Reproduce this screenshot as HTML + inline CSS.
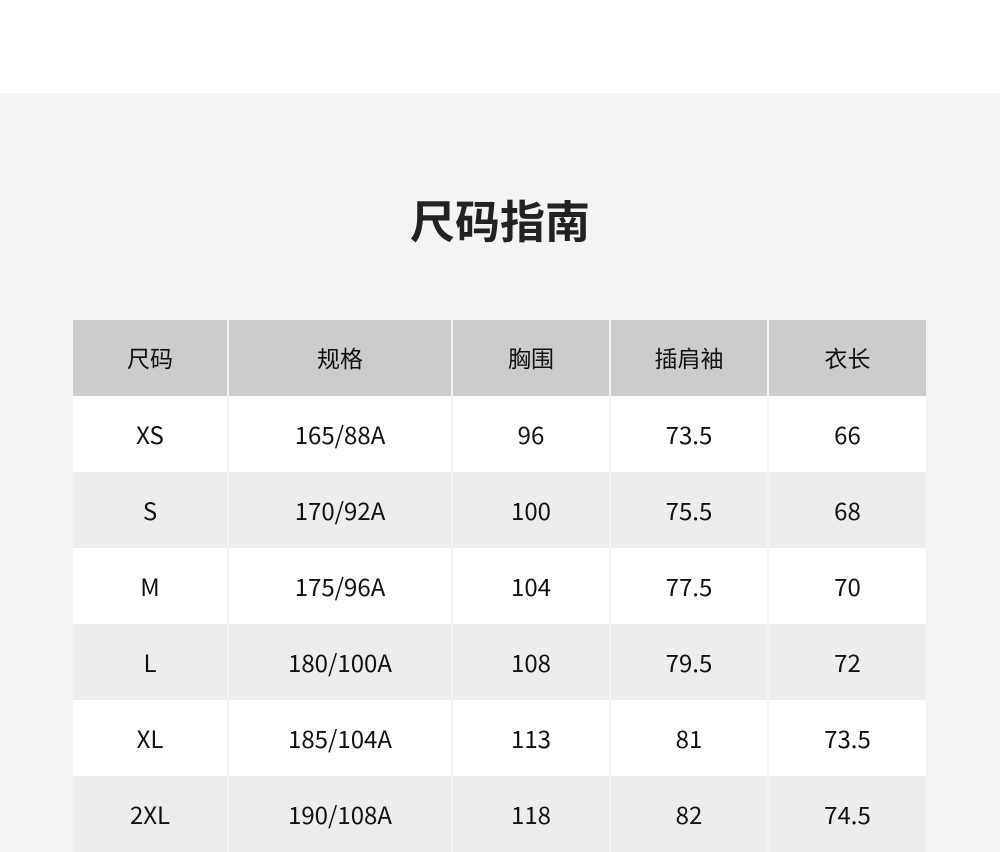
<!DOCTYPE html><html><head><meta charset="utf-8"><style>
body{margin:0;width:1000px;height:852px;overflow:hidden;background:#f4f4f4;font-family:"Noto Sans CJK SC",sans-serif;color:#111}
.top{position:absolute;left:0;top:0;width:1000px;height:93px;background:#fff}
h1{position:absolute;top:189px;left:0;width:1000px;margin:0;text-align:center;font-size:45px;font-weight:bold;line-height:60px;color:#222}
table{position:absolute;left:73px;top:320px;border-collapse:collapse}
td{height:76px;padding:0 0 2px;box-sizing:border-box;text-align:center;font-size:24px;border-left:2px solid #f4f4f4}
td:first-child{border-left:0}
tr.h td{background:#ccc;font-size:23px;padding-bottom:3px}
tr.w td{background:#fff}tr.g td{background:#ededed}
</style></head><body><div class="top"></div><h1>尺码指南</h1>
<table><colgroup><col style="width:155px"><col style="width:224px"><col style="width:158px"><col style="width:158px"><col style="width:158px"></colgroup>
<tr class="h"><td>尺码</td><td>规格</td><td>胸围</td><td>插肩袖</td><td>衣长</td></tr>
<tr class="w"><td>XS</td><td>165/88A</td><td>96</td><td>73.5</td><td>66</td></tr>
<tr class="g"><td>S</td><td>170/92A</td><td>100</td><td>75.5</td><td>68</td></tr>
<tr class="w"><td>M</td><td>175/96A</td><td>104</td><td>77.5</td><td>70</td></tr>
<tr class="g"><td>L</td><td>180/100A</td><td>108</td><td>79.5</td><td>72</td></tr>
<tr class="w"><td>XL</td><td>185/104A</td><td>113</td><td>81</td><td>73.5</td></tr>
<tr class="g"><td>2XL</td><td>190/108A</td><td>118</td><td>82</td><td>74.5</td></tr>
</table></body></html>
